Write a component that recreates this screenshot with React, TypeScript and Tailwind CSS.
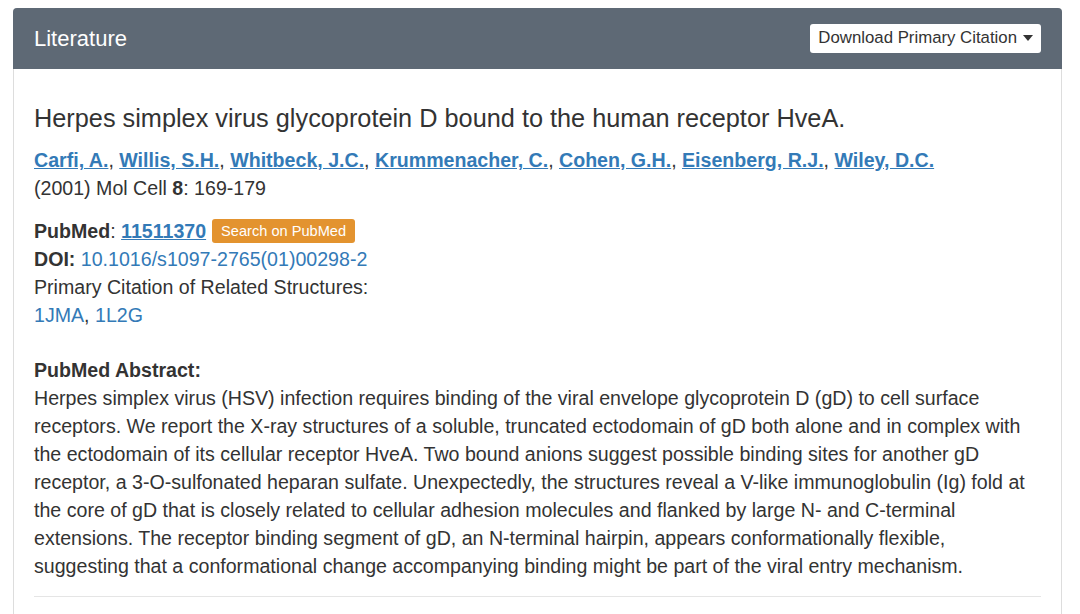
import React from "react";

const authors = [
  "Carfi, A.",
  "Willis, S.H.",
  "Whitbeck, J.C.",
  "Krummenacher, C.",
  "Cohen, G.H.",
  "Eisenberg, R.J.",
  "Wiley, D.C.",
];

export default function App() {
  return (
    <div className="min-h-screen bg-white pt-[8px] pl-[13px] pr-[18px] font-['Liberation_Sans',Arial,sans-serif] text-[#333]">
      <div className="rounded-t-[4px] border border-[#dddddd] bg-white">
        <div className="-m-px flex h-[61px] items-center justify-between rounded-t-[4px] bg-[#5e6975] pl-[21px] pr-[21px]">
          <h2 className="text-[22px] text-white">Literature</h2>
          <button className="-mt-[1px] flex h-[29px] items-center gap-[6px] rounded-[3px] bg-white px-[8px] text-[16.8px] text-[#333]">
            Download Primary Citation
            <svg width="10" height="6" viewBox="0 0 10 6">
              <path d="M0 0h10L5 6z" fill="#333" />
            </svg>
          </button>
        </div>

        <div className="px-[20px] pt-[21px] pb-[40px] text-[19.6px] leading-[28px]">
          <h1 className="mt-[13px] mb-[12px] text-[25.3px] leading-[32px]">
            Herpes simplex virus glycoprotein D bound to the human receptor HveA.
          </h1>
          <div>
            {authors.map((a, i) => (
              <span key={a}>
                <a href="#" className="font-bold text-[#337ab7] underline">
                  {a}
                </a>
                {i < authors.length - 1 && ", "}
              </span>
            ))}
          </div>
          <div>
            (2001) Mol Cell <b>8</b>: 169-179
          </div>

          <div className="mt-[15px]">
            <div className="flex items-center">
              <b>PubMed</b>:&nbsp;
              <a href="#" className="font-bold text-[#337ab7] underline">
                11511370
              </a>
              <span className="ml-[6px] inline-flex h-[24px] items-center rounded-[3px] bg-[#e3932f] px-[9px] text-[14.6px] text-white">
                Search on PubMed
              </span>
            </div>
            <div>
              <b>DOI:</b>{" "}
              <a href="#" className="text-[#337ab7]">
                10.1016/s1097-2765(01)00298-2
              </a>
            </div>
            <div>Primary Citation of Related Structures:</div>
            <div>
              <a href="#" className="text-[#337ab7]">1JMA</a>,{" "}
              <a href="#" className="text-[#337ab7]">1L2G</a>
            </div>
          </div>

          <div className="mt-[27px]">
            <b>PubMed Abstract:</b>
            <p>
              Herpes simplex virus (HSV) infection requires binding of the viral envelope glycoprotein D (gD) to cell surface receptors. We report the X-ray structures of a soluble, truncated ectodomain of gD both alone and in complex with the ectodomain of its cellular receptor HveA. Two bound anions suggest possible binding sites for another gD receptor, a 3-O-sulfonated heparan sulfate. Unexpectedly, the structures reveal a V-like immunoglobulin (Ig) fold at the core of gD that is closely related to cellular adhesion molecules and flanked by large N- and C-terminal extensions. The receptor binding segment of gD, an N-terminal hairpin, appears conformationally flexible, suggesting that a conformational change accompanying binding might be part of the viral entry mechanism.
            </p>
          </div>
          <hr className="mt-[16px] border-t border-[#e5e5e5]" />
        </div>
      </div>
    </div>
  );
}
